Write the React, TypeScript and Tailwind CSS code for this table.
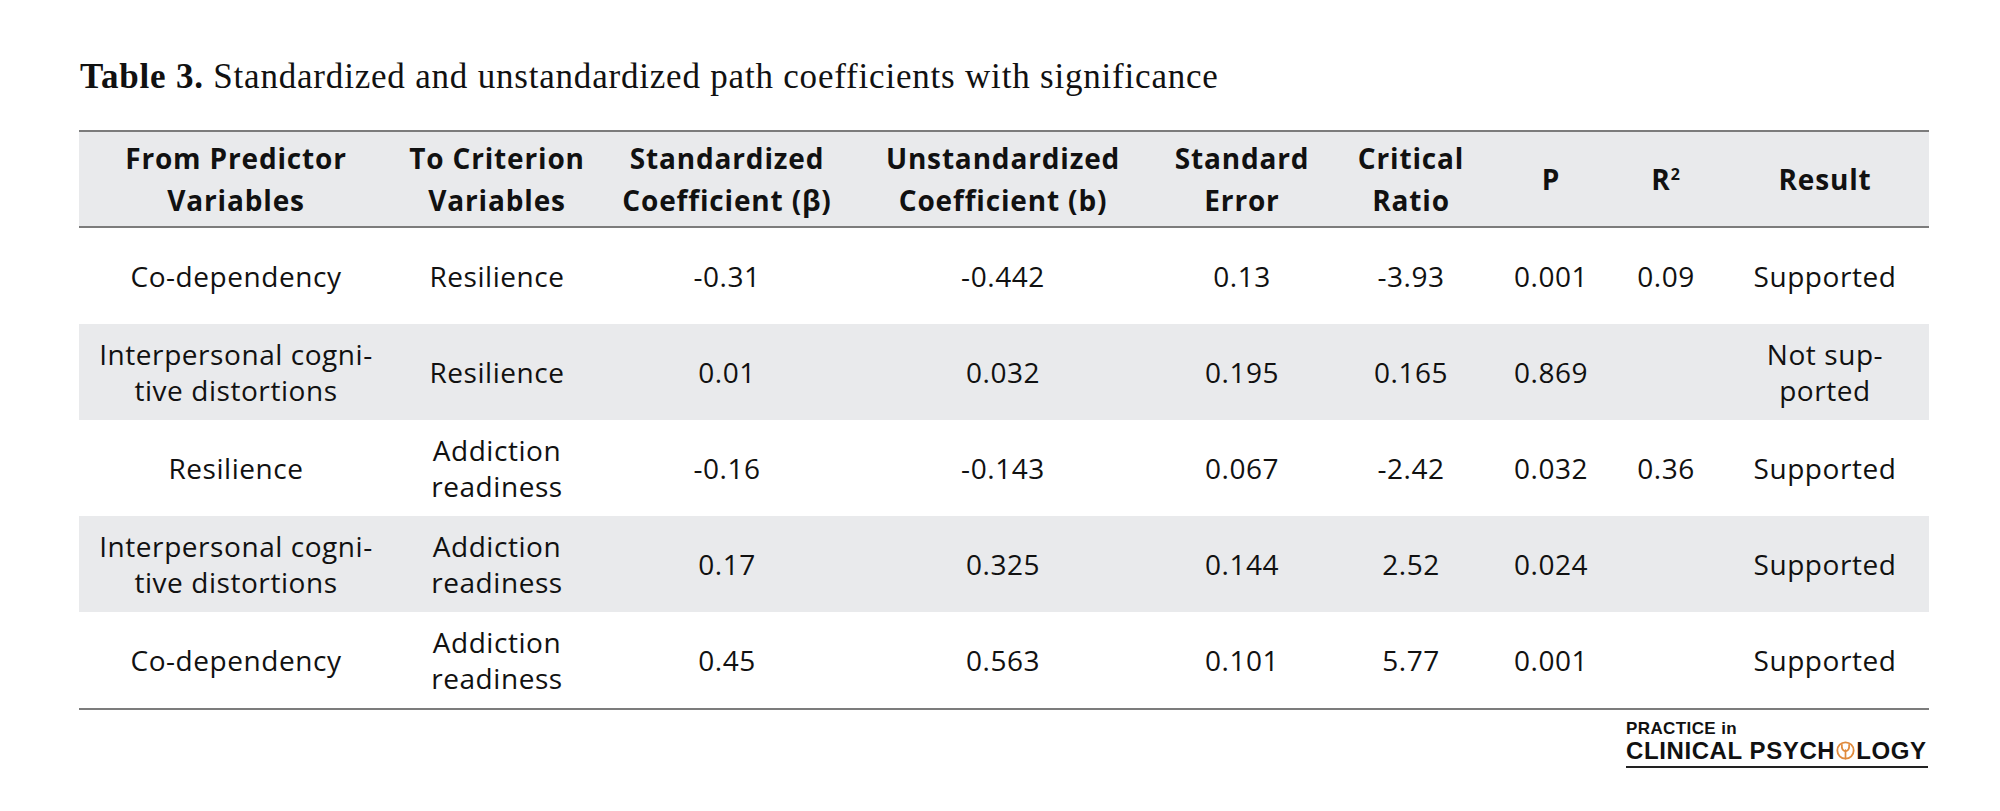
import React from "react";

type Row = {
  from: React.ReactNode;
  to: React.ReactNode;
  beta: string;
  b: string;
  se: string;
  cr: string;
  p: string;
  r2: string;
  result: React.ReactNode;
  gray: boolean;
};

const rows: Row[] = [
  { from: "Co-dependency", to: "Resilience", beta: "-0.31", b: "-0.442", se: "0.13", cr: "-3.93", p: "0.001", r2: "0.09", result: "Supported", gray: false },
  { from: (<>Interpersonal cogni-<br />tive distortions</>), to: "Resilience", beta: "0.01", b: "0.032", se: "0.195", cr: "0.165", p: "0.869", r2: "", result: (<>Not sup-<br />ported</>), gray: true },
  { from: "Resilience", to: (<>Addiction<br />readiness</>), beta: "-0.16", b: "-0.143", se: "0.067", cr: "-2.42", p: "0.032", r2: "0.36", result: "Supported", gray: false },
  { from: (<>Interpersonal cogni-<br />tive distortions</>), to: (<>Addiction<br />readiness</>), beta: "0.17", b: "0.325", se: "0.144", cr: "2.52", p: "0.024", r2: "", result: "Supported", gray: true },
  { from: "Co-dependency", to: (<>Addiction<br />readiness</>), beta: "0.45", b: "0.563", se: "0.101", cr: "5.77", p: "0.001", r2: "", result: "Supported", gray: false },
];

const gridCols = "grid grid-cols-[314px_208px_252px_300px_178px_160px_120px_110px_208px]";

function Cell({ children }: { children: React.ReactNode }) {
  return <div className="flex items-center justify-center text-center">{children}</div>;
}

function Logo() {
  return (
    <div className="w-[302px] flex flex-col items-start">
      <div className="font-['Liberation_Sans',sans-serif] font-bold text-[17px] leading-[18px] tracking-[0.4px] text-[#111]">
        PRACTICE in
      </div>
      <div className="flex items-center font-['Liberation_Sans',sans-serif] font-bold text-[24px] leading-[25px] tracking-[0.6px] text-[#111]">
        <span>CLINICAL PSYCH</span>
        <svg width="19" height="19" viewBox="0 0 20 20" className="mx-[1px]">
          <circle cx="10" cy="10" r="8.6" fill="none" stroke="#e08a3c" strokeWidth="1.9" />
          <path d="M10 18.5 V9.5 M10 11 C7.2 10.2 5.8 7.6 6.2 4 M10 11 C12.8 10.2 14.2 7.6 13.8 4" fill="none" stroke="#e08a3c" strokeWidth="1.8" strokeLinecap="round" />
        </svg>
        <span>LOGY</span>
      </div>
      <div className="w-full h-[2px] bg-[#222] mt-[3px]" />
    </div>
  );
}

export default function App() {
  return (
    <div className="w-[2000px] h-[811px] bg-white overflow-hidden">
      <div className="pl-[80px] pt-[57px] h-[130px] font-['Liberation_Serif',serif] text-[35px] leading-[40px] tracking-[0.8px] text-[#111]">
        <span className="font-bold">Table 3.</span> Standardized and unstandardized path coefficients with significance
      </div>
      <div className="ml-[79px] w-[1850px] font-['Open_Sans',sans-serif] text-[#111]">
        <div className={`${gridCols} h-[98px] bg-[#e9eaec] border-y-2 border-[#7c7c7c] font-bold text-[28px] leading-[42px] tracking-[0.03em]`}>
          <Cell>From Predictor<br />Variables</Cell>
          <Cell>To Criterion<br />Variables</Cell>
          <Cell>Standardized<br />Coefficient (β)</Cell>
          <Cell>Unstandardized<br />Coefficient (b)</Cell>
          <Cell>Standard<br />Error</Cell>
          <Cell>Critical<br />Ratio</Cell>
          <Cell>P</Cell>
          <Cell><span>R<sup className="text-[16px] relative top-[-10px]">2</sup></span></Cell>
          <Cell>Result</Cell>
        </div>
        <div className="border-b-2 border-[#7c7c7c] text-[28px] leading-[36px] tracking-[0.02em]">
          {rows.map((r, i) => (
            <div key={i} className={`${gridCols} h-[96px] ${r.gray ? "bg-[#e9eaec]" : "bg-white"}`}>
              <Cell>{r.from}</Cell>
              <Cell>{r.to}</Cell>
              <Cell>{r.beta}</Cell>
              <Cell>{r.b}</Cell>
              <Cell>{r.se}</Cell>
              <Cell>{r.cr}</Cell>
              <Cell>{r.p}</Cell>
              <Cell>{r.r2}</Cell>
              <Cell>{r.result}</Cell>
            </div>
          ))}
        </div>
        <div className="flex justify-end pt-[10px] pr-[1px]">
          <Logo />
        </div>
      </div>
    </div>
  );
}
